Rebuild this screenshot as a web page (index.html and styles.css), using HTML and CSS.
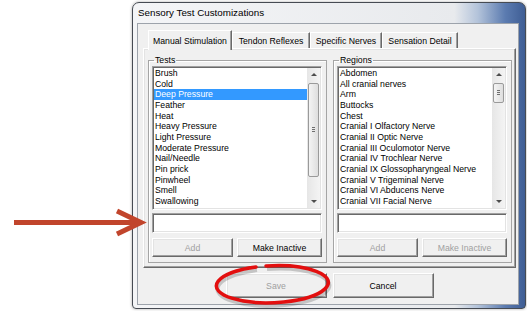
FILE: index.html
```html
<!DOCTYPE html>
<html lang="en">
<head>
  <meta charset="UTF-8">
  <title>Sensory Test Customizations</title>
  <link rel="stylesheet" href="styles.css">
</head>
<body>

  <div class="window">
    <div class="titlebar">Sensory Test Customizations</div>
    <div class="client">
      <div class="tabs">
        <div class="tab active tab-manual">Manual Stimulation</div>
        <div class="tab tab-tendon">Tendon Reflexes</div>
        <div class="tab tab-specific">Specific Nerves</div>
        <div class="tab tab-sensation">Sensation Detail</div>
      </div>

      <div class="panel">
        <fieldset class="group">
          <legend>Tests</legend>
          <div class="listbox">
            <ul class="items">
              <li>Brush</li>
              <li>Cold</li>
              <li class="selected">Deep Pressure</li>
              <li>Feather</li>
              <li>Heat</li>
              <li>Heavy Pressure</li>
              <li>Light Pressure</li>
              <li>Moderate Pressure</li>
              <li>Nail/Needle</li>
              <li>Pin prick</li>
              <li>Pinwheel</li>
              <li>Smell</li>
              <li>Swallowing</li>
            </ul>
            <div class="scrollbar">
              <div class="arrow up"></div>
              <div class="track"><div class="thumb" style="height: 94px"></div></div>
              <div class="arrow down"></div>
            </div>
          </div>
          <div class="textbox"></div>
          <div class="buttons">
            <button class="btn" disabled>Add</button>
            <button class="btn">Make Inactive</button>
          </div>
        </fieldset>

        <fieldset class="group">
          <legend>Regions</legend>
          <div class="listbox">
            <ul class="items">
              <li>Abdomen</li>
              <li>All cranial nerves</li>
              <li>Arm</li>
              <li>Buttocks</li>
              <li>Chest</li>
              <li>Cranial I Olfactory Nerve</li>
              <li>Cranial II Optic Nerve</li>
              <li>Cranial III Oculomotor Nerve</li>
              <li>Cranial IV Trochlear Nerve</li>
              <li>Cranial IX Glossopharyngeal Nerve</li>
              <li>Cranial V Trigeminal Nerve</li>
              <li>Cranial VI Abducens Nerve</li>
              <li>Cranial VII Facial Nerve</li>
            </ul>
            <div class="scrollbar">
              <div class="arrow up"></div>
              <div class="track"><div class="thumb" style="height: 20px"></div></div>
              <div class="arrow down"></div>
            </div>
          </div>
          <div class="textbox"></div>
          <div class="buttons">
            <button class="btn" disabled>Add</button>
            <button class="btn" disabled>Make Inactive</button>
          </div>
        </fieldset>
      </div>

      <div class="footer">
        <button class="btn big" disabled>Save</button>
        <button class="btn big">Cancel</button>
      </div>
    </div>
  </div>

  <!-- callouts drawn over the screenshot -->
  <svg class="annotations" width="527" height="311" viewBox="0 0 527 311">
    <g stroke="#c1452c" stroke-width="5" fill="none">
      <line x1="14" y1="222.5" x2="141" y2="222.5"/>
      <polyline points="117,211 141,222.5 117,234" stroke-linejoin="miter"/>
    </g>
    <path d="M 266 267 A 56 18.5 -2 1 1 256 268" stroke="#000" stroke-opacity="0.18" stroke-width="4" fill="none" transform="translate(1 2)"/>
    <path d="M 266 266 A 56 18.5 -2 1 1 256 267" stroke="#e30f0f" stroke-width="3.5" fill="none" stroke-linecap="round"/>
  </svg>

</body>
</html>
```

FILE: styles.css
```css
body {
  margin: 0;
  width: 527px;
  height: 311px;
  background: #fff;
  font-family: "Liberation Sans", Arial, sans-serif;
  font-size: 8.7px;
  color: #000;
  overflow: hidden;
  position: relative;
}

.window {
  margin: 2px 0 0 132px;
  width: 394px;
  height: 307px;
  box-sizing: border-box;
  border: 1px solid #464b53;
  border-radius: 7px 7px 4px 4px;
  background: linear-gradient(to right, #f4f5f7 0%, #e8eaed 82%, #b3c3da 88%, #5b7bb0 95%, #3e5d94 100%);
  box-shadow: 0 0 3px rgba(0, 0, 0, 0.35);
  display: flex;
  flex-direction: column;
}

.titlebar {
  height: 20px;
  line-height: 20px;
  padding-left: 5px;
  font-size: 9.8px;
}

.client {
  flex: 1;
  margin: 0 6px 3px 4px;
  border: 1px solid #9da3ab;
  background: #f0f0f0;
  padding: 6px 2px 0 5px;
}

/* tab strip */
.tabs {
  display: flex;
  align-items: flex-end;
  height: 20px;
  margin-bottom: -2px;
  padding-left: 5px;
  position: relative;
  z-index: 1;
}

.tab {
  box-sizing: border-box;
  height: 16px;
  margin-bottom: 2px;
  padding-top: 1px;
  line-height: 15px;
  text-align: center;
  white-space: nowrap;
  border-top: 1px solid #fff;
  border-left: 1px solid #fff;
  border-right: 1px solid #696969;
  box-shadow: inset -1px 0 #a0a0a0;
  background: #f0f0f0;
}

.tab.active {
  height: 20px;
  margin-bottom: 0;
  padding-top: 3px;
}

.tab-manual { width: 84px; }
.tab-tendon { width: 78px; }
.tab-specific { width: 72px; }
.tab-sensation { width: 76px; }

.panel {
  height: 220px;
  box-sizing: border-box;
  border: 1px solid;
  border-color: #fff #696969 #696969 #fff;
  box-shadow: inset -1px -1px #a0a0a0, inset 1px 1px #e3e3e3;
  padding: 6px 3px 3px 4px;
  display: grid;
  grid-template-columns: 1fr 1fr;
  column-gap: 6px;
  align-items: start;
}

.group {
  margin: 0;
  min-width: 0;
  padding: 1px 4px 5px 3px;
  border: 1px solid #a5a5a5;
  box-shadow: inset 1px 1px #fff;
}

.group legend {
  padding: 0 1px;
  margin-left: 2px;
  line-height: 10px;
}

.listbox {
  height: 144px;
  box-sizing: border-box;
  border: 1px solid;
  border-color: #a0a0a0 #fff #fff #a0a0a0;
  box-shadow: inset 1px 1px #696969, inset -1px -1px #e3e3e3;
  padding: 1px;
  background: #fff;
  display: flex;
}

.items {
  flex: 1;
  min-width: 0;
  margin: 0;
  padding: 0;
  list-style: none;
  overflow: hidden;
}

.items li {
  height: 10.67px;
  line-height: 10.67px;
  padding-left: 1px;
  white-space: nowrap;
}

.items li.selected {
  background: #3399ff;
  color: #fff;
}

.scrollbar {
  width: 13px;
  display: flex;
  flex-direction: column;
  background: linear-gradient(to right, #e6e6e6, #f4f4f4);
}

.arrow {
  height: 13px;
  display: flex;
  align-items: center;
  justify-content: center;
}

.arrow::before {
  content: "";
  border-left: 3px solid transparent;
  border-right: 3px solid transparent;
}

.arrow.up::before { border-bottom: 3px solid #4d4d4d; }
.arrow.down::before { border-top: 3px solid #4d4d4d; }

.track {
  flex: 1;
}

.thumb {
  position: relative;
  box-sizing: border-box;
  margin: 2px 1px 0;
  border: 1px solid #9a9a9a;
  border-radius: 2px;
  background: linear-gradient(to right, #f4f4f4, #dedede);
}

.thumb::after {
  content: "";
  position: absolute;
  left: 3px;
  right: 3px;
  top: 50%;
  height: 5px;
  margin-top: -3px;
  background: repeating-linear-gradient(#6f6f6f 0 1px, transparent 1px 2px);
}

.textbox {
  margin-top: 3px;
  height: 20px;
  box-sizing: border-box;
  border: 1px solid;
  border-color: #a0a0a0 #fff #fff #a0a0a0;
  box-shadow: inset 1px 1px #696969, inset -1px -1px #e3e3e3;
  background: #fff;
}

.buttons {
  margin-top: 5px;
  height: 19px;
  display: grid;
  grid-template-columns: 81px 1fr;
  column-gap: 4px;
}

.btn {
  font: inherit;
  color: #000;
  padding: 0;
  height: 100%;
  background: #f0f0f0;
  border: 1px solid;
  border-color: #fff #696969 #696969 #fff;
  box-shadow: inset -1px -1px #a0a0a0, inset 1px 1px #e3e3e3;
}

.btn:disabled {
  color: #a0a0a0;
}

.footer {
  margin-top: 5px;
  display: flex;
  justify-content: center;
  gap: 6px;
}

.btn.big {
  width: 101px;
  height: 25px;
}

.annotations {
  position: absolute;
  left: 0;
  top: 0;
  pointer-events: none;
}
```
